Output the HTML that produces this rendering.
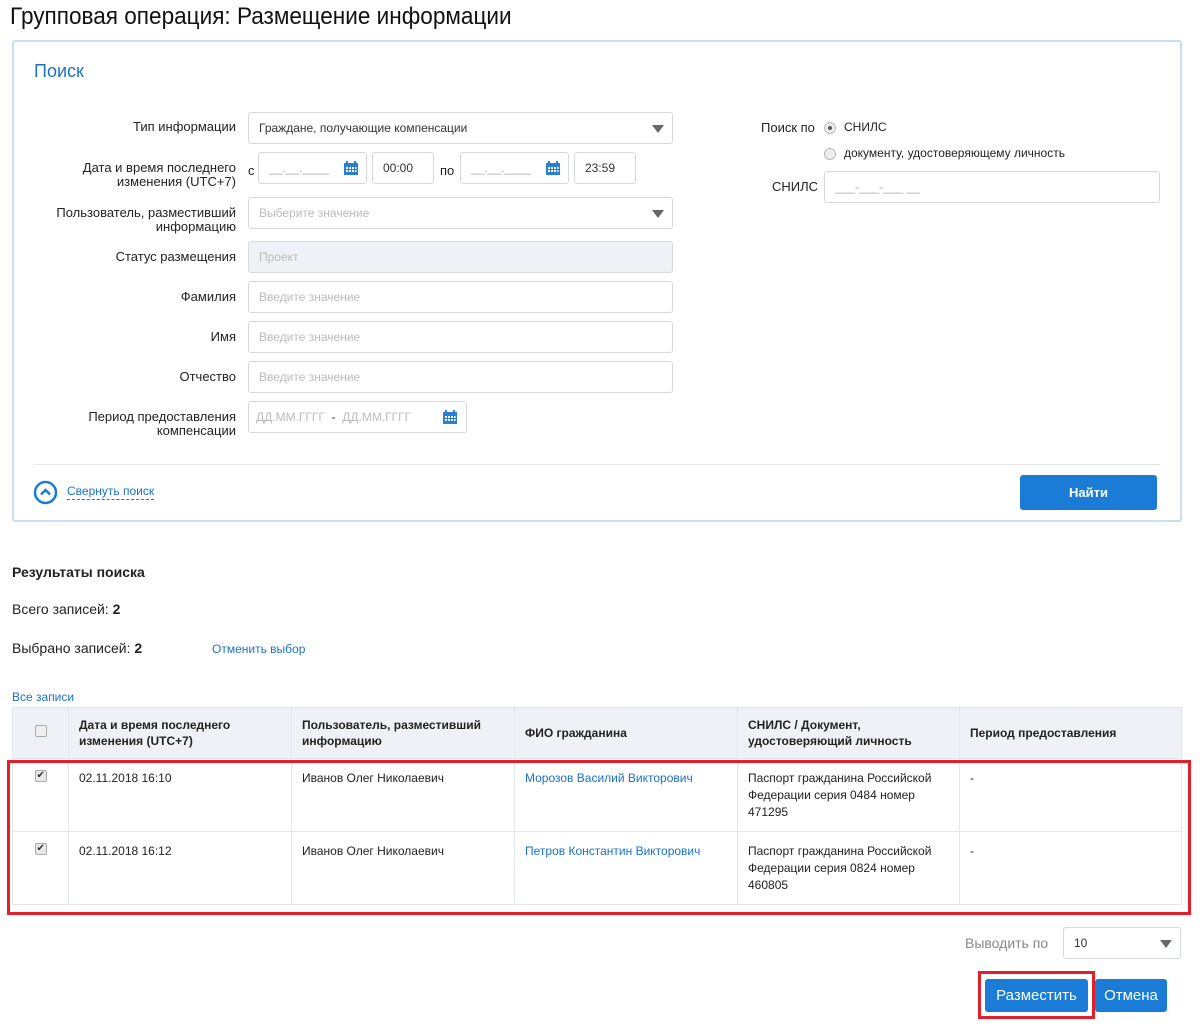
<!DOCTYPE html>
<html><head><meta charset="utf-8"><style>
*{box-sizing:border-box;margin:0;padding:0}
body{width:1203px;height:1028px;background:#fff;position:relative;overflow:hidden;font-family:"Liberation Sans Narrow","Liberation Sans",sans-serif;color:#222;font-size:13px}
.a{position:absolute;white-space:nowrap}
.lbl{position:absolute;right:967px;text-align:right;font-size:13px;line-height:14px;color:#222}
.inp{position:absolute;border:1px solid #d5d9de;border-radius:3px;background:#fff;font-size:12px;color:#bbb;padding-left:10px;display:flex;align-items:center}
.arrow{position:absolute;right:8px;top:12px;width:0;height:0;border-left:6px solid transparent;border-right:6px solid transparent;border-top:8px solid #666}
.blue{color:#1a73c4}
.cal{position:absolute;width:14px;height:14px}
.btn{position:absolute;background:#1a7cd6;color:#fff;border-radius:3px;display:flex;align-items:center;justify-content:center;font-weight:bold}
table{position:absolute;left:12px;top:707px;width:1170px;border-collapse:collapse;font-size:12px}
td,th{border:1px solid #e3e6ea;vertical-align:top;text-align:left}
th{background:#eef2f6;font-weight:bold;vertical-align:middle;padding:0 10px;height:51px;line-height:16px}
td{padding:11px 10px 0;height:73px;line-height:17px}
.cb{width:12px;height:12px;border:1px solid #aaa;border-radius:2px;background:#eee;display:inline-block;position:relative}
</style></head><body>
<div class="a" style="left:10px;top:3px;font-size:24px;color:#111;transform:scaleX(0.94);transform-origin:left top">Групповая операция: Размещение информации</div>
<div class="a" style="left:12px;top:40px;width:1170px;height:482px;border:2px solid #c8dff3;border-radius:3px"></div>
<div class="a blue" style="left:34px;top:61px;font-size:18px">Поиск</div>

<div class="lbl" style="top:120px">Тип информации</div>
<div class="inp" style="left:248px;top:112px;width:425px;height:32px;color:#333">Граждане, получающие компенсации<div class="arrow"></div></div>
<div class="lbl" style="top:161px">Дата и время последнего<br>изменения (UTC+7)</div>
<div class="a" style="left:248px;top:163px">с</div>
<div class="inp" style="left:258px;top:152px;width:109px;height:32px;color:#aaa">__.__.____
<svg class="cal" style="right:8px;top:8px" viewBox="0 0 14 14"><rect x="0" y="2" width="14" height="12" fill="#2a7fd4"/><rect x="2" y="0" width="2" height="3" fill="#2a7fd4"/><rect x="10" y="0" width="2" height="3" fill="#2a7fd4"/><g fill="#fff"><rect x="2" y="6" width="2" height="2"/><rect x="5" y="6" width="2" height="2"/><rect x="8" y="6" width="2" height="2"/><rect x="11" y="6" width="1.5" height="2"/><rect x="2" y="9" width="2" height="2"/><rect x="5" y="9" width="2" height="2"/><rect x="8" y="9" width="2" height="2"/><rect x="11" y="9" width="1.5" height="2"/></g></svg></div>
<div class="inp" style="left:372px;top:152px;width:62px;height:32px;color:#333">00:00</div>
<div class="a" style="left:440px;top:163px">по</div>
<div class="inp" style="left:460px;top:152px;width:109px;height:32px;color:#aaa">__.__.____
<svg class="cal" style="right:8px;top:8px" viewBox="0 0 14 14"><rect x="0" y="2" width="14" height="12" fill="#2a7fd4"/><rect x="2" y="0" width="2" height="3" fill="#2a7fd4"/><rect x="10" y="0" width="2" height="3" fill="#2a7fd4"/><g fill="#fff"><rect x="2" y="6" width="2" height="2"/><rect x="5" y="6" width="2" height="2"/><rect x="8" y="6" width="2" height="2"/><rect x="11" y="6" width="1.5" height="2"/><rect x="2" y="9" width="2" height="2"/><rect x="5" y="9" width="2" height="2"/><rect x="8" y="9" width="2" height="2"/><rect x="11" y="9" width="1.5" height="2"/></g></svg></div>
<div class="inp" style="left:574px;top:152px;width:62px;height:32px;color:#333">23:59</div>
<div class="lbl" style="top:206px">Пользователь, разместивший<br>информацию</div>
<div class="inp" style="left:248px;top:197px;width:425px;height:32px">Выберите значение<div class="arrow"></div></div>
<div class="lbl" style="top:250px">Статус размещения</div>
<div class="inp" style="left:248px;top:241px;width:425px;height:32px;background:#eef2f6">Проект</div>
<div class="lbl" style="top:290px">Фамилия</div>
<div class="inp" style="left:248px;top:281px;width:425px;height:32px">Введите значение</div>
<div class="lbl" style="top:330px">Имя</div>
<div class="inp" style="left:248px;top:321px;width:425px;height:32px">Введите значение</div>
<div class="lbl" style="top:370px">Отчество</div>
<div class="inp" style="left:248px;top:361px;width:425px;height:32px">Введите значение</div>
<div class="lbl" style="top:410px">Период предоставления<br>компенсации</div>
<div class="inp" style="left:248px;top:401px;width:219px;height:32px;padding-left:7px">ДД.ММ.ГГГГ &nbsp;<span style="color:#334">-</span>&nbsp; ДД.ММ.ГГГГ
<svg class="cal" style="right:9px;top:8px" viewBox="0 0 14 14"><rect x="0" y="2" width="14" height="12" fill="#2a7fd4"/><rect x="2" y="0" width="2" height="3" fill="#2a7fd4"/><rect x="10" y="0" width="2" height="3" fill="#2a7fd4"/><g fill="#fff"><rect x="2" y="6" width="2" height="2"/><rect x="5" y="6" width="2" height="2"/><rect x="8" y="6" width="2" height="2"/><rect x="11" y="6" width="1.5" height="2"/><rect x="2" y="9" width="2" height="2"/><rect x="5" y="9" width="2" height="2"/><rect x="8" y="9" width="2" height="2"/><rect x="11" y="9" width="1.5" height="2"/></g></svg></div>

<div class="a" style="left:761px;top:120px">Поиск по</div>
<div class="a" style="left:824px;top:122px;width:12px;height:12px;border:1px solid #bbb;border-radius:50%;background:#eee"><div style="position:absolute;left:3px;top:3px;width:4px;height:4px;border-radius:50%;background:#555"></div></div>
<div class="a" style="left:844px;top:120px;font-size:12px">СНИЛС</div>
<div class="a" style="left:824px;top:148px;width:12px;height:12px;border:1px solid #bbb;border-radius:50%;background:#eee"></div>
<div class="a" style="left:844px;top:146px;font-size:12px">документу, удостоверяющему личность</div>
<div class="a" style="left:772px;top:179px">СНИЛС</div>
<div class="inp" style="left:824px;top:171px;width:336px;height:32px;color:#aaa">___-___-___ __</div>

<div class="a" style="left:34px;top:464px;width:1126px;height:1px;background:#e3e6ea"></div>
<svg class="a" style="left:33px;top:480px" width="25" height="25" viewBox="0 0 25 25"><circle cx="12.5" cy="12.5" r="10.5" fill="none" stroke="#1a7cd6" stroke-width="2.5"/><path d="M8 14.5 L12.5 10 L17 14.5" fill="none" stroke="#1a7cd6" stroke-width="2.5"/></svg>
<div class="a blue" style="left:67px;top:484px;font-size:12px;border-bottom:1px dashed #1a73c4;padding-bottom:1px">Свернуть поиск</div>
<div class="btn" style="left:1020px;top:475px;width:137px;height:35px;font-size:13px">Найти</div>

<div class="a" style="left:12px;top:564px;font-weight:bold;font-size:14px">Результаты поиска</div>
<div class="a" style="left:12px;top:601px;font-size:14px">Всего записей: <b>2</b></div>
<div class="a" style="left:12px;top:640px;font-size:14px">Выбрано записей: <b>2</b></div>
<div class="a blue" style="left:212px;top:642px;font-size:12px">Отменить выбор</div>
<div class="a blue" style="left:12px;top:690px;font-size:12px">Все записи</div>

<table>
<tr style="height:51px"><th style="width:56px;text-align:center;height:51px"><span class="cb"></span></th><th style="width:223px">Дата и время последнего<br>изменения (UTC+7)</th><th style="width:223px">Пользователь, разместивший<br>информацию</th><th style="width:223px">ФИО гражданина</th><th style="width:222px">СНИЛС / Документ,<br>удостоверяющий личность</th><th>Период предоставления</th></tr>
<tr style="height:73px"><td style="text-align:center"><span class="cb" style="background:#e8e8e8"><span style="position:absolute;left:1px;top:-4px;font-size:10px;color:#333">✔</span></span></td><td>02.11.2018 16:10</td><td>Иванов Олег Николаевич</td><td class="blue">Морозов Василий Викторович</td><td>Паспорт гражданина Российской Федерации серия 0484 номер 471295</td><td>-</td></tr>
<tr style="height:73px"><td style="text-align:center"><span class="cb" style="background:#e8e8e8"><span style="position:absolute;left:1px;top:-4px;font-size:10px;color:#333">✔</span></span></td><td>02.11.2018 16:12</td><td>Иванов Олег Николаевич</td><td class="blue">Петров Константин Викторович</td><td>Паспорт гражданина Российской Федерации серия 0824 номер 460805</td><td>-</td></tr>
</table>
<div class="a" style="left:7px;top:760px;width:1184px;height:155px;border:3px solid #e0202a"></div>

<div class="a" style="left:965px;top:935px;font-size:14px;color:#888">Выводить по</div>
<div class="inp" style="left:1063px;top:927px;width:118px;height:32px;color:#333">10<div class="arrow"></div></div>
<div class="a" style="left:978px;top:971px;width:117px;height:48px;border:3px solid #e0202a"></div>
<div class="btn" style="left:985px;top:979px;width:103px;height:33px;font-size:15px;font-weight:normal">Разместить</div>
<div class="btn" style="left:1095px;top:979px;width:72px;height:33px;font-size:15px;font-weight:normal">Отмена</div>
</body></html>
